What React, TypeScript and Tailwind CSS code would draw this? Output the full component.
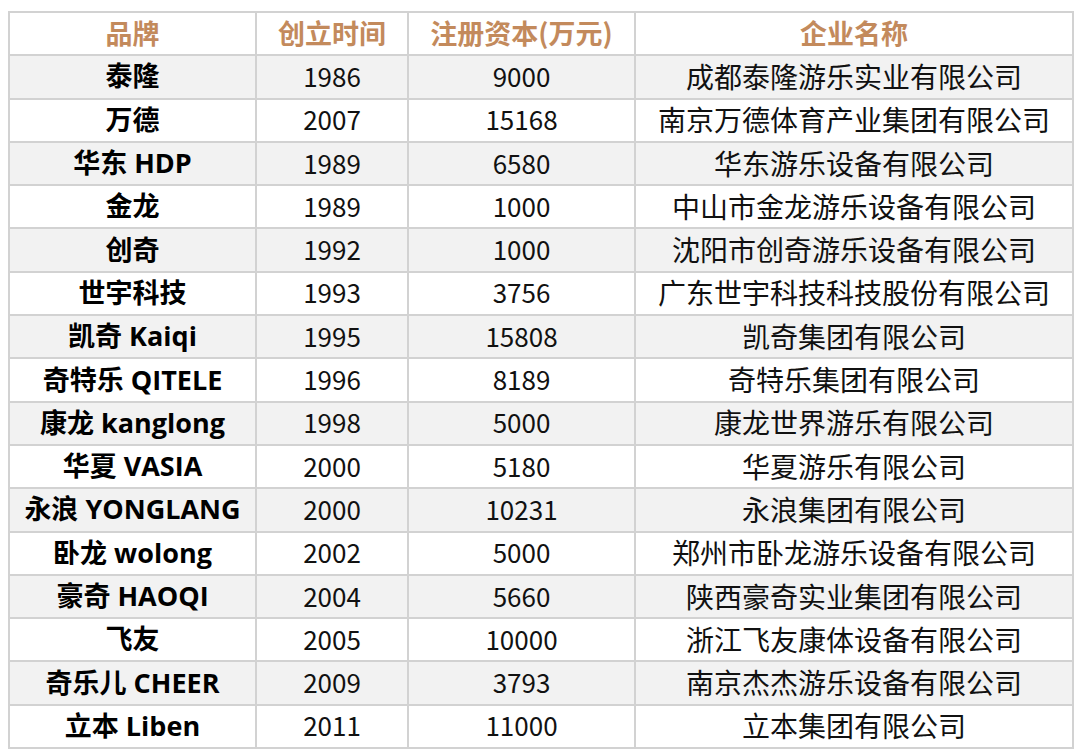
const HEAD = ['品牌', '创立时间', '注册资本(万元)', '企业名称']

const ROWS: [string, string, string, string][] = [
  ['泰隆', '1986', '9000', '成都泰隆游乐实业有限公司'],
  ['万德', '2007', '15168', '南京万德体育产业集团有限公司'],
  ['华东 HDP', '1989', '6580', '华东游乐设备有限公司'],
  ['金龙', '1989', '1000', '中山市金龙游乐设备有限公司'],
  ['创奇', '1992', '1000', '沈阳市创奇游乐设备有限公司'],
  ['世宇科技', '1993', '3756', '广东世宇科技科技股份有限公司'],
  ['凯奇 Kaiqi', '1995', '15808', '凯奇集团有限公司'],
  ['奇特乐 QITELE', '1996', '8189', '奇特乐集团有限公司'],
  ['康龙 kanglong', '1998', '5000', '康龙世界游乐有限公司'],
  ['华夏 VASIA', '2000', '5180', '华夏游乐有限公司'],
  ['永浪 YONGLANG', '2000', '10231', '永浪集团有限公司'],
  ['卧龙 wolong', '2002', '5000', '郑州市卧龙游乐设备有限公司'],
  ['豪奇 HAOQI', '2004', '5660', '陕西豪奇实业集团有限公司'],
  ['飞友', '2005', '10000', '浙江飞友康体设备有限公司'],
  ['奇乐儿 CHEER', '2009', '3793', '南京杰杰游乐设备有限公司'],
  ['立本 Liben', '2011', '11000', '立本集团有限公司'],
]

const cell = 'border-2 border-[#d2d2d2] text-center p-0 leading-none'

export default function App() {
  return (
    <div className="w-[1080px] h-[755px] bg-white pt-[11px] pl-[8px]" style={{ fontFamily: '"Noto Sans CJK SC", "Noto Sans", sans-serif' }}>
      <table className="border-collapse table-fixed w-[1064px]">
        <colgroup>
          <col className="w-[247px]" />
          <col className="w-[152px]" />
          <col className="w-[227px]" />
          <col className="w-[438px]" />
        </colgroup>
        <thead>
          <tr className="h-[43.3px]">
            {HEAD.map((h) => (
              <th key={h} className={`${cell} pb-[2px] text-[27px] font-bold text-[#c38a5c]`}>{h}</th>
            ))}
          </tr>
        </thead>
        <tbody>
          {ROWS.map((r, i) => (
            <tr key={r[0]} className={`h-[43.3px] ${i % 2 === 0 ? 'bg-[#f2f2f2]' : 'bg-white'}`}>
              <td
                className={`${cell} pb-[2px] text-[27px] font-bold text-black`}
                style={{ fontFamily: '"Open Sans", "Noto Sans CJK SC", sans-serif' }}
              >
                {r[0]}
              </td>
              <td className={`${cell} pb-[2px] text-[26px] text-[#111]`}>{r[1]}</td>
              <td className={`${cell} pb-[2px] text-[26px] text-[#111]`}>{r[2]}</td>
              <td className={`${cell} pb-[2px] text-[28px] text-[#111]`}>{r[3]}</td>
            </tr>
          ))}
        </tbody>
      </table>
    </div>
  )
}
